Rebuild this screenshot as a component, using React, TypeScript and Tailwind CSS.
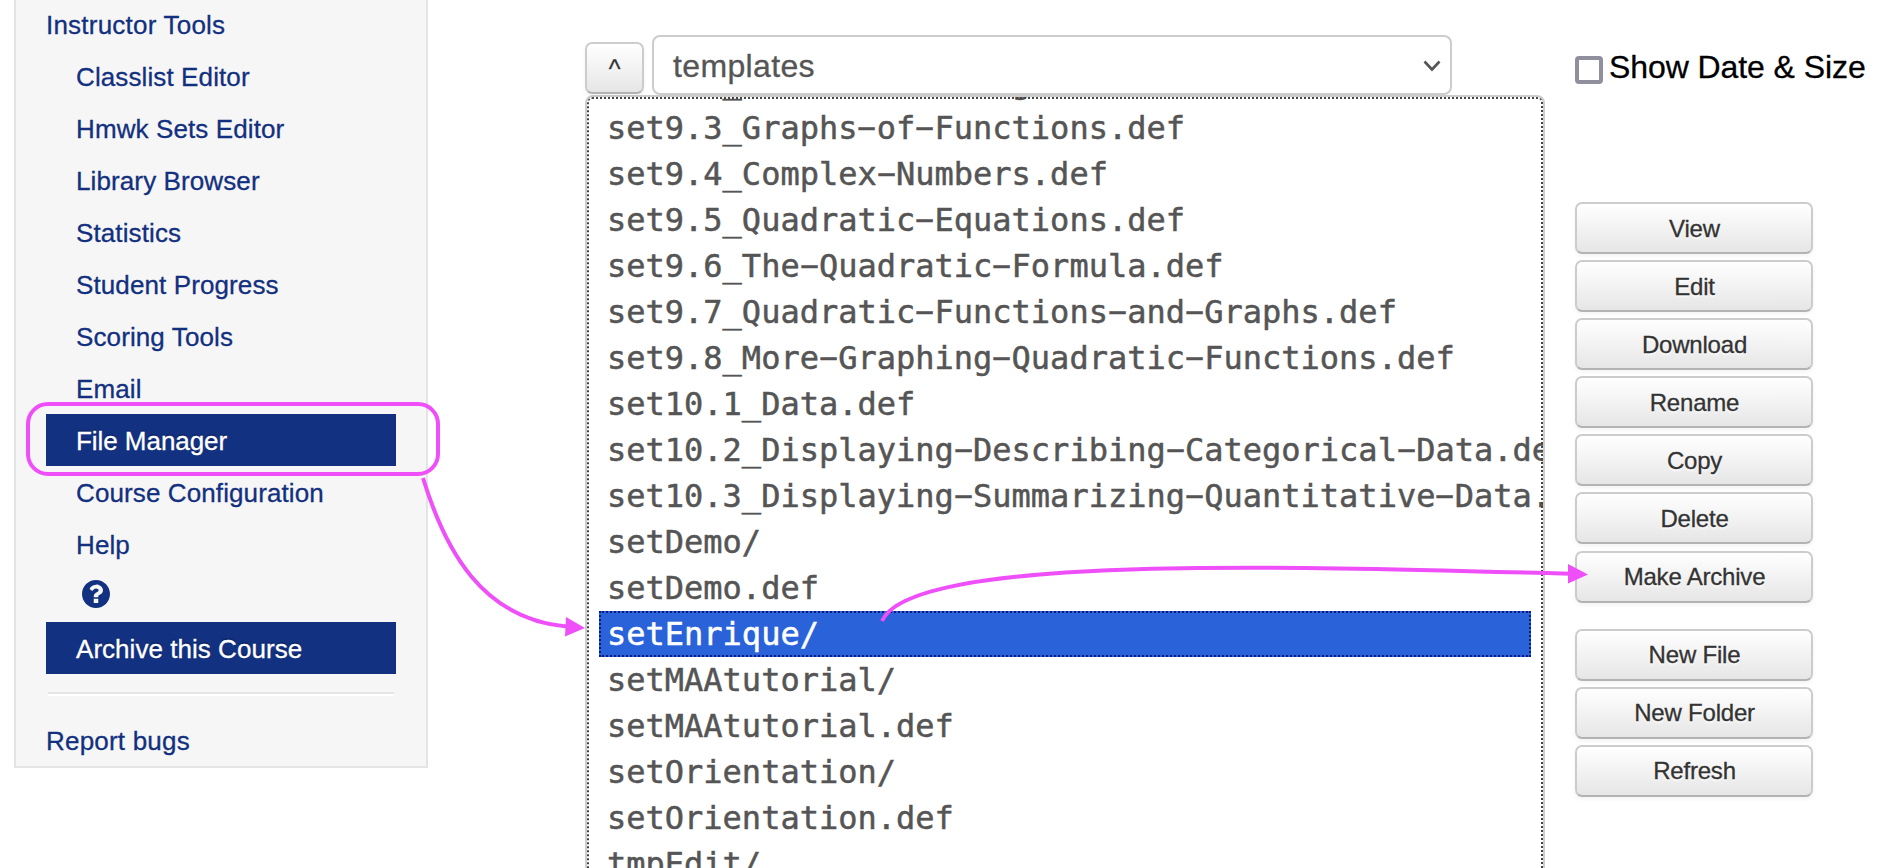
import React from "react";

const navItems = [
  "Classlist Editor",
  "Hmwk Sets Editor",
  "Library Browser",
  "Statistics",
  "Student Progress",
  "Scoring Tools",
  "Email",
  "File Manager",
  "Course Configuration",
  "Help",
];

const files = [
  "set9.2_More-on-Solving.def",
  "set9.3_Graphs-of-Functions.def",
  "set9.4_Complex-Numbers.def",
  "set9.5_Quadratic-Equations.def",
  "set9.6_The-Quadratic-Formula.def",
  "set9.7_Quadratic-Functions-and-Graphs.def",
  "set9.8_More-Graphing-Quadratic-Functions.def",
  "set10.1_Data.def",
  "set10.2_Displaying-Describing-Categorical-Data.def",
  "set10.3_Displaying-Summarizing-Quantitative-Data.def",
  "setDemo/",
  "setDemo.def",
  "setEnrique/",
  "setMAAtutorial/",
  "setMAAtutorial.def",
  "setOrientation/",
  "setOrientation.def",
  "tmpEdit/",
];

const fileActions = ["View", "Edit", "Download", "Rename", "Copy", "Delete", "Make Archive"];
const createActions = ["New File", "New Folder", "Refresh"];

const buttonStyle =
  "flex items-center justify-center rounded-[7px] border-2 border-[#cccccc] border-b-[#b3b3b3] bg-linear-to-b from-white to-[#e6e6e6] text-[#333333] shadow-[0_2px_4px_rgba(0,0,0,0.05)] [text-shadow:0_2px_2px_rgba(255,255,255,0.75)] [-webkit-text-stroke:0.3px]";

function ActionButton({ label }: { label: string }) {
  return (
    <button className={`${buttonStyle} h-[52px] w-[238px] pt-px pl-px text-[24px] leading-none tracking-[-0.2px]`}>
      {label}
    </button>
  );
}

function FileName({ name }: { name: string }) {
  const parts = name.split("-");
  return (
    <>
      {parts.map((part, i) => (
        <React.Fragment key={i}>
          {i > 0 && <span className="inline-block -translate-y-px scale-x-[1.9]">-</span>}
          {part}
        </React.Fragment>
      ))}
    </>
  );
}

function Sidebar() {
  return (
    <nav className="h-[768px] w-[414px] shrink-0 border-2 border-t-0 border-[#e4e4e4] bg-[#f6f6f6] px-[30px] text-[26px] leading-[54px] tracking-[0.11px] text-[#12307f] [-webkit-text-stroke:0.3px]">
      <a className="-mt-[2px] block h-[52px] tracking-[0.22px]">Instructor Tools</a>
      {navItems.map((item) => (
        <a
          key={item}
          className={`block h-[52px] pl-[30px] ${
            item === "File Manager" ? "bg-[#123180] tracking-[-0.05px] text-white [text-shadow:0_-2px_0_rgba(0,0,0,0.2)]" : ""
          }`}
        >
          {item}
        </a>
      ))}
      <div className="flex h-[52px] items-start pt-[10px] pl-9">
        <svg viewBox="8 8 496 496" className="size-7" fill="#123180">
          <path d="M504 256c0 136.997-111.043 248-248 248S8 392.997 8 256C8 119.083 119.043 8 256 8s248 111.083 248 248zM262.655 90c-54.497 0-89.255 22.957-116.549 63.758-3.536 5.286-2.353 12.415 2.715 16.258l34.699 26.31c5.205 3.947 12.621 3.008 16.665-2.122 17.864-22.658 30.113-35.797 57.303-35.797 20.429 0 45.698 13.148 45.698 32.958 0 14.976-12.363 22.667-32.534 33.976C247.128 238.528 216 254.941 216 296v18h80v-16c0-28.462 83.186-29.647 83.186-106.667 0-58.002-60.165-102-116.531-102zM216 340v76h80v-76z" />
        </svg>
      </div>
      <a className="block h-[52px] bg-[#123180] pl-[30px] tracking-[0.04px] text-white [text-shadow:0_-2px_0_rgba(0,0,0,0.2)]">
        Archive this Course
      </a>
      <hr className="mx-[2px] mt-[18px] mb-[18px] h-1 border-t-2 border-b-2 border-t-[#e5e5e5] border-b-white" />
      <a className="block h-[52px] tracking-[0.2px]">Report bugs</a>
    </nav>
  );
}

export default function App() {
  return (
    <main className="relative flex h-[868px] w-[1904px] items-start overflow-hidden bg-white pl-[14px] font-['Liberation_Sans',Arial,sans-serif]">
      <Sidebar />

      <section className="ml-[157px] w-[960px] shrink-0 pt-[35px]">
        <div className="flex h-[60px] items-start gap-[8px]">
          <button className={`${buttonStyle} mt-[7px] h-[52px] w-[59px] pt-[3px] text-[25px]`}>^</button>
          <div className="flex h-[60px] w-[800px] items-center justify-between rounded-[8px] border-2 border-[#cccccc] pr-[9px] pl-[19px] text-[32px] tracking-[0.35px] text-[#555555] [-webkit-text-stroke:0.3px]">
            <span className="pt-px">templates</span>
            <svg viewBox="0 0 18 12" className="mt-[2px] h-3 w-[18px]" fill="none" stroke="#555" strokeWidth="2.6">
              <path d="M1.5 1.5 L9 9.5 L16.5 1.5" />
            </svg>
          </div>
        </div>
        <div className="h-[800px] overflow-hidden rounded-[8px] border-2 border-[#cccccc] bg-white">
          <div className="h-[800px] overflow-hidden rounded-[5px] px-[12px] font-['DejaVu_Sans_Mono',monospace] text-[32px] leading-[46px] text-[#555555] outline-2 -outline-offset-2 outline-[#444444] outline-dotted [-webkit-text-stroke:0.5px]">
            <ul className="-mt-[38px]">
              {files.map((file) => (
                <li
                  key={file}
                  className={`h-[46px] whitespace-pre ${
                    file === "setEnrique/"
                      ? "border-2 border-dotted border-[#0a1a80] bg-[#2962d9] pl-[6px] leading-[42px] text-white"
                      : "pl-[8px]"
                  }`}
                >
                  <FileName name={file} />
                </li>
              ))}
            </ul>
          </div>
        </div>
      </section>

      <aside className="ml-[30px] flex flex-col pt-[50px]">
        <label className="flex h-[40px] items-start text-[32px] leading-[35px] tracking-[-0.08px] whitespace-nowrap text-black [-webkit-text-stroke:0.3px]">
          <span className="mt-[6px] mr-[6px] size-7 shrink-0 rounded-[4px] border-4 border-[#8f8f9d] bg-white" />
          Show Date &amp; Size
        </label>
        <div className="mt-[112px] flex flex-col gap-[6.1px]">
          {fileActions.map((label) => (
            <ActionButton key={label} label={label} />
          ))}
        </div>
        <div className="mt-[26px] flex flex-col gap-[6.1px]">
          {createActions.map((label) => (
            <ActionButton key={label} label={label} />
          ))}
        </div>
      </aside>

      <svg className="pointer-events-none absolute inset-0" width="1904" height="868" fill="none">
        <rect x="28" y="404" width="410" height="70" rx="20" stroke="#ee4ff8" strokeWidth="4" />
        <path d="M423 478 C445 550 482 619 567 626.5" stroke="#ee4ff8" strokeWidth="4" />
        <path d="M585 628 L566 617 L565 636.5 Z" fill="#ee4ff8" />
        <path d="M882 621 C910 555.6 1268 565.3 1570 573.8" stroke="#ee4ff8" strokeWidth="4" />
        <path d="M1588 574.5 L1568 564 V583.5 Z" fill="#ee4ff8" />
      </svg>
    </main>
  );
}
